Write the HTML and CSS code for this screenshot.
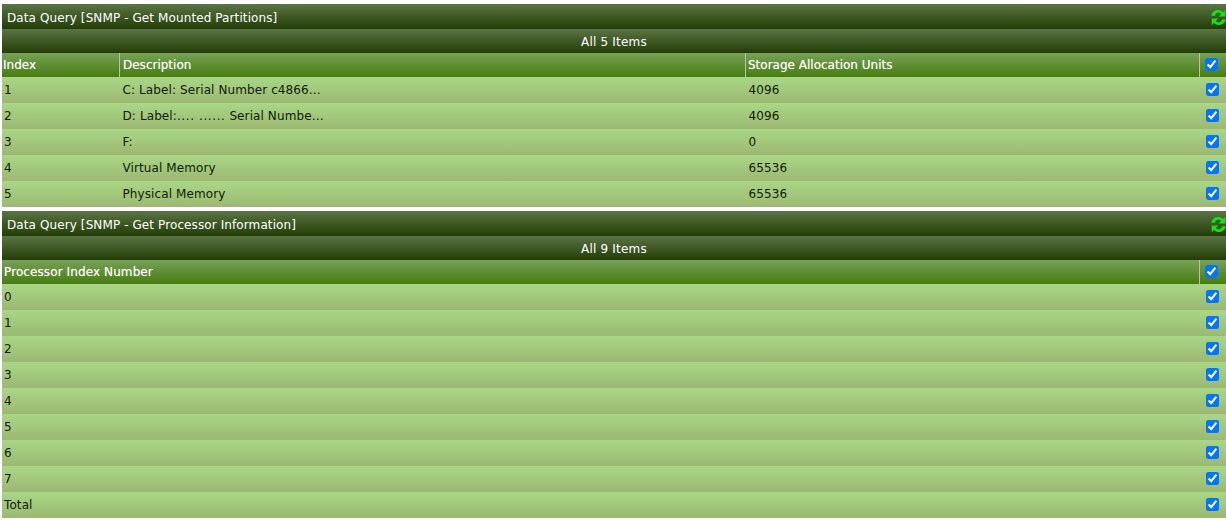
FILE: index.html
```html
<!DOCTYPE html>
<html>
  <head>
    <title>Data Queries</title>
    <link rel="stylesheet" href="styles.css">
  </head>
  <body>

	<div class="panel">
		<div class="panelTitle">
			<span>Data Query [SNMP - Get Mounted Partitions]</span>
			<svg class="reload" viewBox="0 0 16 16"><path d="M14.4 .8v6.200H8.200l2.300-2.300A3.300 3.300 0 0 0 4.600 6.300H1.200A6.700 6.700 0 0 1 12.400 2.800zM1.600 15.200V9h6.200l-2.300 2.300a3.300 3.300 0 0 0 5.900-1.600h3.400A6.700 6.700 0 0 1 3.600 13.200z"/></svg>
		</div>
		<div class="panelNav">All 5 Items</div>
		<table class="grid">
			<tr class="head">
				<th class="colIndex">Index</th>
				<th class="colDesc">Description</th>
				<th class="colUnits">Storage Allocation Units</th>
				<th class="colCheck"><input type="checkbox" checked></th>
			</tr>
			<tr><td>1</td><td class="desc">C: Label: Serial Number c4866…</td><td class="units">4096</td><td class="colCheck"><input type="checkbox" checked></td></tr>
			<tr><td>2</td><td class="desc">D: Label:<span class="dots">.... ......</span> Serial Numbe…</td><td class="units">4096</td><td class="colCheck"><input type="checkbox" checked></td></tr>
			<tr><td>3</td><td class="desc">F:</td><td class="units">0</td><td class="colCheck"><input type="checkbox" checked></td></tr>
			<tr><td>4</td><td class="desc">Virtual Memory</td><td class="units">65536</td><td class="colCheck"><input type="checkbox" checked></td></tr>
			<tr><td>5</td><td class="desc">Physical Memory</td><td class="units">65536</td><td class="colCheck"><input type="checkbox" checked></td></tr>
		</table>
	</div>

	<div class="panel">
		<div class="panelTitle">
			<span>Data Query [SNMP - Get Processor Information]</span>
			<svg class="reload" viewBox="0 0 16 16"><path d="M14.4 .8v6.200H8.200l2.300-2.300A3.300 3.300 0 0 0 4.600 6.300H1.200A6.700 6.700 0 0 1 12.400 2.800zM1.600 15.200V9h6.200l-2.300 2.300a3.300 3.300 0 0 0 5.900-1.600h3.400A6.700 6.700 0 0 1 3.600 13.200z"/></svg>
		</div>
		<div class="panelNav">All 9 Items</div>
		<table class="grid">
			<tr class="head">
				<th class="colFirst">Processor Index Number</th>
				<th class="colCheck"><input type="checkbox" checked></th>
			</tr>
			<tr><td>0</td><td class="colCheck"><input type="checkbox" checked></td></tr>
			<tr><td>1</td><td class="colCheck"><input type="checkbox" checked></td></tr>
			<tr><td>2</td><td class="colCheck"><input type="checkbox" checked></td></tr>
			<tr><td>3</td><td class="colCheck"><input type="checkbox" checked></td></tr>
			<tr><td>4</td><td class="colCheck"><input type="checkbox" checked></td></tr>
			<tr><td>5</td><td class="colCheck"><input type="checkbox" checked></td></tr>
			<tr><td>6</td><td class="colCheck"><input type="checkbox" checked></td></tr>
			<tr><td>7</td><td class="colCheck"><input type="checkbox" checked></td></tr>
			<tr><td>Total</td><td class="colCheck"><input type="checkbox" checked></td></tr>
		</table>
	</div>

  </body>
</html>
```

FILE: styles.css
```css
html, body { overflow: hidden; }
body { margin: 0; padding: 4px 0 0 2px; background: #fff; font-family: "DejaVu Sans", Verdana, sans-serif; font-size: 12px; color: #101c02; }

.panel { margin-bottom: 4px; }

.panelTitle { display: flex; align-items: center; justify-content: space-between; box-sizing: border-box; height: 25px; padding: 2px 0 0 5px; letter-spacing: 0.1px; color: #fff; background: linear-gradient(#5b7444, #223d06); }
.panelNav { box-sizing: border-box; height: 24px; padding-top: 1px; line-height: 24px; text-align: center; letter-spacing: 0.2px; color: #fff; background: linear-gradient(#5b7444, #223d06); }

.reload { flex: none; width: 17px; height: 17px; margin: 0 -1px 0 0; fill: #0fe80f; }

.grid { width: 100%; border-collapse: collapse; table-layout: fixed; }
.grid th { height: 24px; padding: 0 1px; font-weight: 400; text-align: left; color: #fff; text-shadow: 0 0 1px rgba(255, 255, 255, 0.45); background: linear-gradient(#77a158, #477c10); border-left: 1px solid #b5c5a3; }
.grid th:first-child { border-left: none; }
.grid td { height: 26px; padding: 0 2px; letter-spacing: 0.1px; background: linear-gradient(#a9d786, #9cb872); }

.colIndex { width: 115px; }
.colDesc { width: 621px; padding-left: 3px !important; }
.colUnits { padding-left: 2px !important; }
.colFirst { padding-left: 2px !important; letter-spacing: 0.1px; }
.colCheck { width: 24px; }
.desc { padding-left: 3px !important; }
.units { padding-left: 3px !important; }
.dots { letter-spacing: 0.6px; }

input { display: block; margin: 0 0 2px 4px; width: 13px; height: 13px; }
```
